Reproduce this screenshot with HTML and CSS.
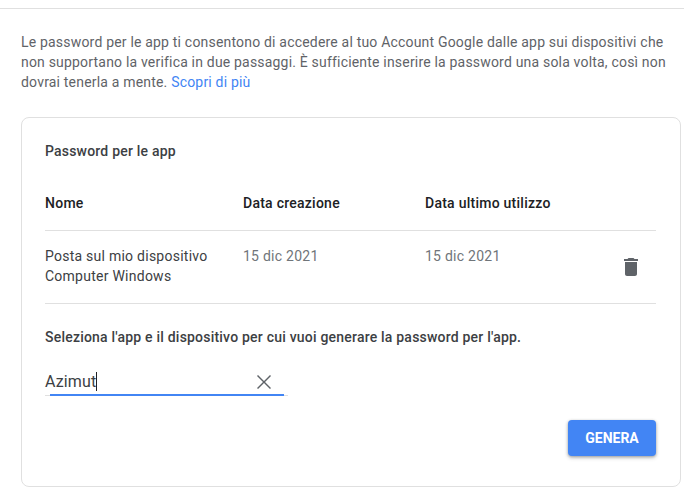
FILE: index.html
```html
<!DOCTYPE html>
<html lang="it">
<head>
    <meta charset="UTF-8">
    <meta name="viewport" content="width=device-width, initial-scale=1.0">
    <title>Password per le app</title>
    <link rel="stylesheet" href="styles.css">
</head>
<body>
    <div class="top-rule"></div>
    <p class="intro">Le password per le app ti consentono di accedere al tuo Account Google dalle app sui dispositivi che non supportano la verifica in due passaggi. È sufficiente inserire la password una sola volta, così non dovrai tenerla a mente. <a href="#">Scopri di più</a></p>
    <div class="card">
        <div class="card-title">Password per le app</div>
        <div class="row head-row">
            <div class="col-name">Nome</div>
            <div class="col-created">Data creazione</div>
            <div class="col-used">Data ultimo utilizzo</div>
        </div>
        <div class="row app-row">
            <div class="col-name">
                <div>Posta sul mio dispositivo</div>
                <div>Computer Windows</div>
            </div>
            <div class="col-created muted">15 dic 2021</div>
            <div class="col-used muted">15 dic 2021</div>
            <svg class="trash" viewBox="0 0 24 24" width="24" height="24">
                <path d="M6 19c0 1.100.9 2 2 2h8c1.100 0 2-.9 2-2V7H6v12zM19 4h-3.500l-1-1h-5l-1 1H5v2h14V4z"/>
            </svg>
        </div>
        <div class="select-label">Seleziona l'app e il dispositivo per cui vuoi generare la password per l'app.</div>
        <div class="field">
            <span class="field-value">Azimut</span><span class="caret"></span>
            <svg class="clear" viewBox="0 0 24 24" width="24" height="24">
                <path d="M19 6 18 5 12 11 6 5 5 6 11 12 5 18 6 19 12 13 18 19 19 18 13 12z"/>
            </svg>
        </div>
        <div class="actions">
            <button type="button" class="generate">GENERA</button>
        </div>
    </div>
</body>
</html>
```

FILE: styles.css
```css
body {
    margin: 0;
    background-color: #fff;
    color: #5f6368;
    font-family: Roboto, sans-serif;
    font-size: 14px;
    line-height: 20px;
    overflow: hidden;
}
.top-rule {
    height: 1px;
    margin-top: 8px;
    background-color: #e0e0e0;
}
.intro {
    margin: 23px 0 0 21px;
    width: 650px;
    letter-spacing: 0.19px;
}
.intro a {
    color: #4285f4;
    text-decoration: none;
}
.card {
    box-sizing: border-box;
    width: 660px;
    height: 370px;
    margin: 25px 0 0 21px;
    padding: 23px 24px 0 23px;
    border: 1px solid #e0e0e0;
    border-radius: 8px;
}
.card-title {
    color: #3c4043;
    font-weight: 500;
    letter-spacing: 0.2px;
}
.row {
    display: flex;
    width: 611px;
}
.head-row {
    height: 59px;
    margin-top: 11px;
    padding-top: 21px;
    box-sizing: border-box;
    border-bottom: 1px solid #e0e0e0;
    color: #202124;
    font-weight: 500;
    letter-spacing: 0.25px;
}
.app-row {
    position: relative;
    height: 73px;
    padding-top: 15px;
    box-sizing: border-box;
    border-bottom: 1px solid #e0e0e0;
    color: #3c4043;
    letter-spacing: 0.25px;
}
.col-name {
    width: 198px;
}
.col-created {
    width: 182px;
}
.muted {
    color: #70757a;
    letter-spacing: 0.25px;
}
.trash {
    position: absolute;
    right: 13px;
    top: 24px;
    fill: #5f6368;
}
.select-label {
    margin-top: 23px;
    color: #3c4043;
    font-weight: 500;
    letter-spacing: 0.21px;
}
.field {
    position: relative;
    width: 243px;
    height: 29px;
    margin-top: 20px;
    padding-top: 3px;
    border-bottom: 1px solid #e0e0e0;
    font-size: 16px;
    line-height: 24px;
    letter-spacing: 0.15px;
    color: #3c4043;
    box-sizing: border-box;
}
.field::after {
    content: "";
    position: absolute;
    left: 5px;
    right: 4px;
    bottom: -1px;
    height: 2px;
    background-color: #4285f4;
}
.caret {
    display: inline-block;
    width: 1px;
    height: 19px;
    background-color: #202124;
    vertical-align: -4px;
}
.clear {
    position: absolute;
    left: 207px;
    top: 3px;
    fill: #5f6368;
}
.actions {
    display: flex;
    justify-content: flex-end;
    width: 611px;
    margin-top: 24px;
}
.generate {
    width: 88px;
    height: 36px;
    padding: 0;
    border: none;
    border-radius: 4px;
    background-color: #4285f4;
    color: #fff;
    font-family: Roboto, sans-serif;
    font-size: 14px;
    font-weight: 700;
    box-shadow: 0 1px 3px rgba(60, 64, 67, 0.4), 0 2px 4px rgba(60, 64, 67, 0.2);
}
```
